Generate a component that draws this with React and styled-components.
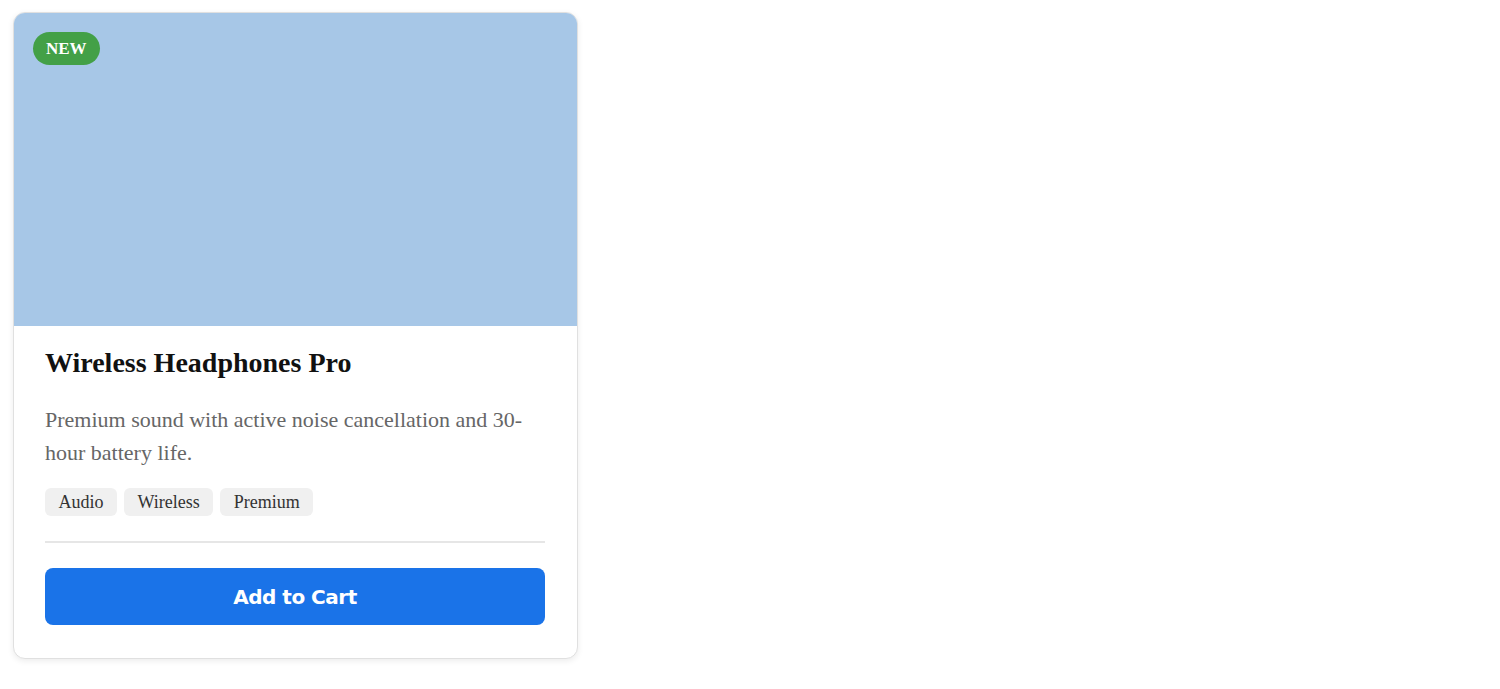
import React from "react"
import styled, { createGlobalStyle } from "styled-components"

const GlobalStyle = createGlobalStyle`
  body {
    margin: 0;
    background: #ffffff;
    font-family: "Liberation Serif", "Times New Roman", serif;
  }
`

const Page = styled.div`
  padding: 12px 13px;
`

const Card = styled.div`
  width: 563px;
  border: 1px solid #e0e0e0;
  border-radius: 12px;
  overflow: hidden;
  background: #ffffff;
  box-shadow: 0 2px 6px rgba(0, 0, 0, 0.08);
`

const ImageArea = styled.div`
  position: relative;
  height: 313px;
  background: #a7c7e7;
`

const Badge = styled.span`
  position: absolute;
  top: 19px;
  left: 19px;
  height: 33px;
  padding: 0 13px;
  display: flex;
  align-items: center;
  border-radius: 17px;
  background: #43a047;
  color: #ffffff;
  font-weight: 700;
  font-size: 17px;
`

const Body = styled.div`
  padding: 21px 32px 33px 31px;
`

const Title = styled.h2`
  margin: 0 0 24px 0;
  font-size: 28px;
  font-weight: 700;
  color: #111111;
`

const Description = styled.p`
  margin: 0 0 19px 0;
  font-size: 22px;
  line-height: 33px;
  color: #666666;
`

const TagRow = styled.div`
  display: flex;
  gap: 7px;
`

const Tag = styled.span`
  height: 28px;
  padding: 0 13.5px;
  display: flex;
  align-items: center;
  border-radius: 6px;
  background: #f0f0f0;
  color: #333333;
  font-size: 18px;
`

const Divider = styled.hr`
  margin: 25px 0 25px 0;
  border: none;
  border-top: 2px solid #e6e6e6;
`

const CartButton = styled.button`
  width: 100%;
  height: 57px;
  border: none;
  border-radius: 8px;
  background: #1a73e8;
  color: #ffffff;
  font-family: "DejaVu Sans", Verdana, sans-serif;
  font-weight: 700;
  font-size: 20px;
  letter-spacing: -0.5px;
  cursor: pointer;
`

const tags = ["Audio", "Wireless", "Premium"]

const App = () => (
  <Page>
    <GlobalStyle />
    <Card>
      <ImageArea>
        <Badge>NEW</Badge>
      </ImageArea>
      <Body>
        <Title>Wireless Headphones Pro</Title>
        <Description>
          Premium sound with active noise cancellation and 30-hour battery life.
        </Description>
        <TagRow>
          {tags.map(tag => (
            <Tag key={tag}>{tag}</Tag>
          ))}
        </TagRow>
        <Divider />
        <CartButton>Add to Cart</CartButton>
      </Body>
    </Card>
  </Page>
)

export default App
